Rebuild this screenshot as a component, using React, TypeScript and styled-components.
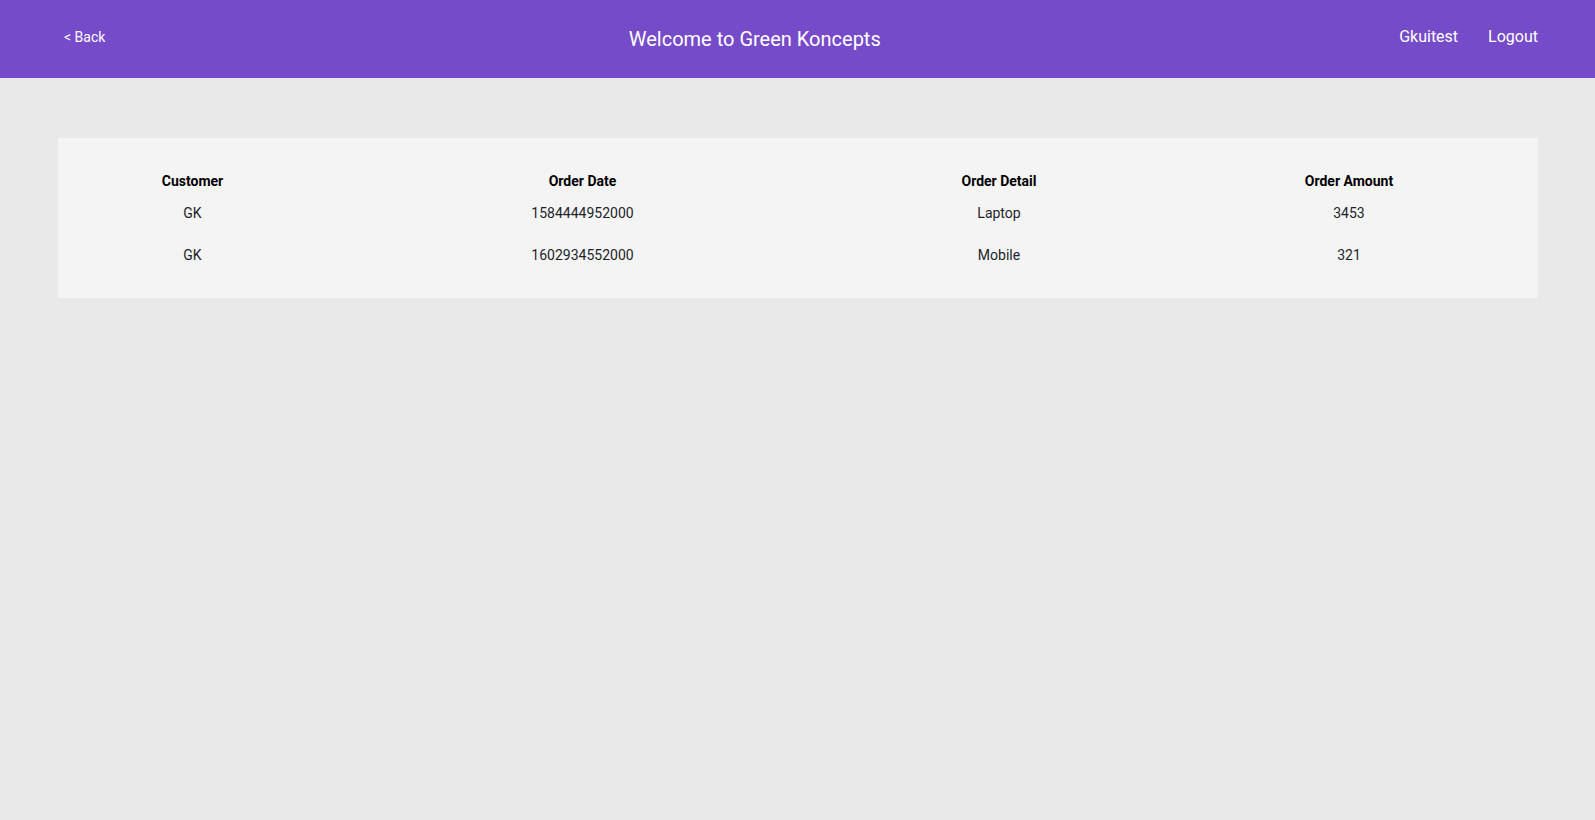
import React from "react";
import styled, { createGlobalStyle } from "styled-components";

const GlobalStyle = createGlobalStyle`
  html, body {
    margin: 0;
    padding: 0;
    background: #e9e9e9;
    font-family: Roboto, "Liberation Sans", Arial, sans-serif;
  }
  * { box-sizing: border-box; }
`;

const Page = styled.div`
  min-height: 820px;
  background: #e9e9e9;
`;

const Header = styled.header`
  height: 78px;
  background: #764bca;
  color: #ffffff;
  display: flex;
  justify-content: space-between;
  align-items: flex-start;
  padding: 27px 57px 0 64px;
`;

const BackLink = styled.a`
  font-size: 14px;
  margin-top: 2px;
  padding-right: 5px;
  color: #ffffff;
  text-decoration: none;
  cursor: pointer;
`;

const Title = styled.h1`
  margin: 0;
  font-size: 20px;
  font-weight: 400;
  line-height: normal;
`;

const UserNav = styled.nav`
  display: flex;
  gap: 30px;
`;

const NavItem = styled.a`
  font-size: 16px;
  color: #ffffff;
  text-decoration: none;
  cursor: pointer;
`;

const Main = styled.main`
  padding: 60px 57px 0 58px;
`;

const Card = styled.section`
  background: #f4f4f4;
  padding: 30px 0 22px;
`;

const Table = styled.table`
  width: 100%;
  border-collapse: collapse;
  table-layout: fixed;
`;

const Th = styled.th<{ $w: number }>`
  width: ${(p) => p.$w}px;
  font-size: 14px;
  font-weight: 700;
  color: #000000;
  text-align: center;
  line-height: 16px;
  padding: 5px 0 3px;
`;

const Td = styled.td`
  font-size: 14px;
  color: #1d1f2b;
  text-align: center;
  line-height: 18px;
  padding: 12px 0;
`;

const columns = [
  { label: "Customer", w: 269 },
  { label: "Order Date", w: 511 },
  { label: "Order Detail", w: 322 },
  { label: "Order Amount", w: 378 },
];

const orders = [
  { customer: "GK", date: "1584444952000", detail: "Laptop", amount: "3453" },
  { customer: "GK", date: "1602934552000", detail: "Mobile", amount: "321" },
];

export default function App() {
  return (
    <Page>
      <GlobalStyle />
      <Header>
        <BackLink>&lt; Back</BackLink>
        <Title>Welcome to Green Koncepts</Title>
        <UserNav>
          <NavItem>Gkuitest</NavItem>
          <NavItem>Logout</NavItem>
        </UserNav>
      </Header>
      <Main>
        <Card>
          <Table>
            <thead>
              <tr>
                {columns.map((c) => (
                  <Th key={c.label} $w={c.w}>
                    {c.label}
                  </Th>
                ))}
              </tr>
            </thead>
            <tbody>
              {orders.map((o, i) => (
                <tr key={i}>
                  <Td>{o.customer}</Td>
                  <Td>{o.date}</Td>
                  <Td>{o.detail}</Td>
                  <Td>{o.amount}</Td>
                </tr>
              ))}
            </tbody>
          </Table>
        </Card>
      </Main>
    </Page>
  );
}
